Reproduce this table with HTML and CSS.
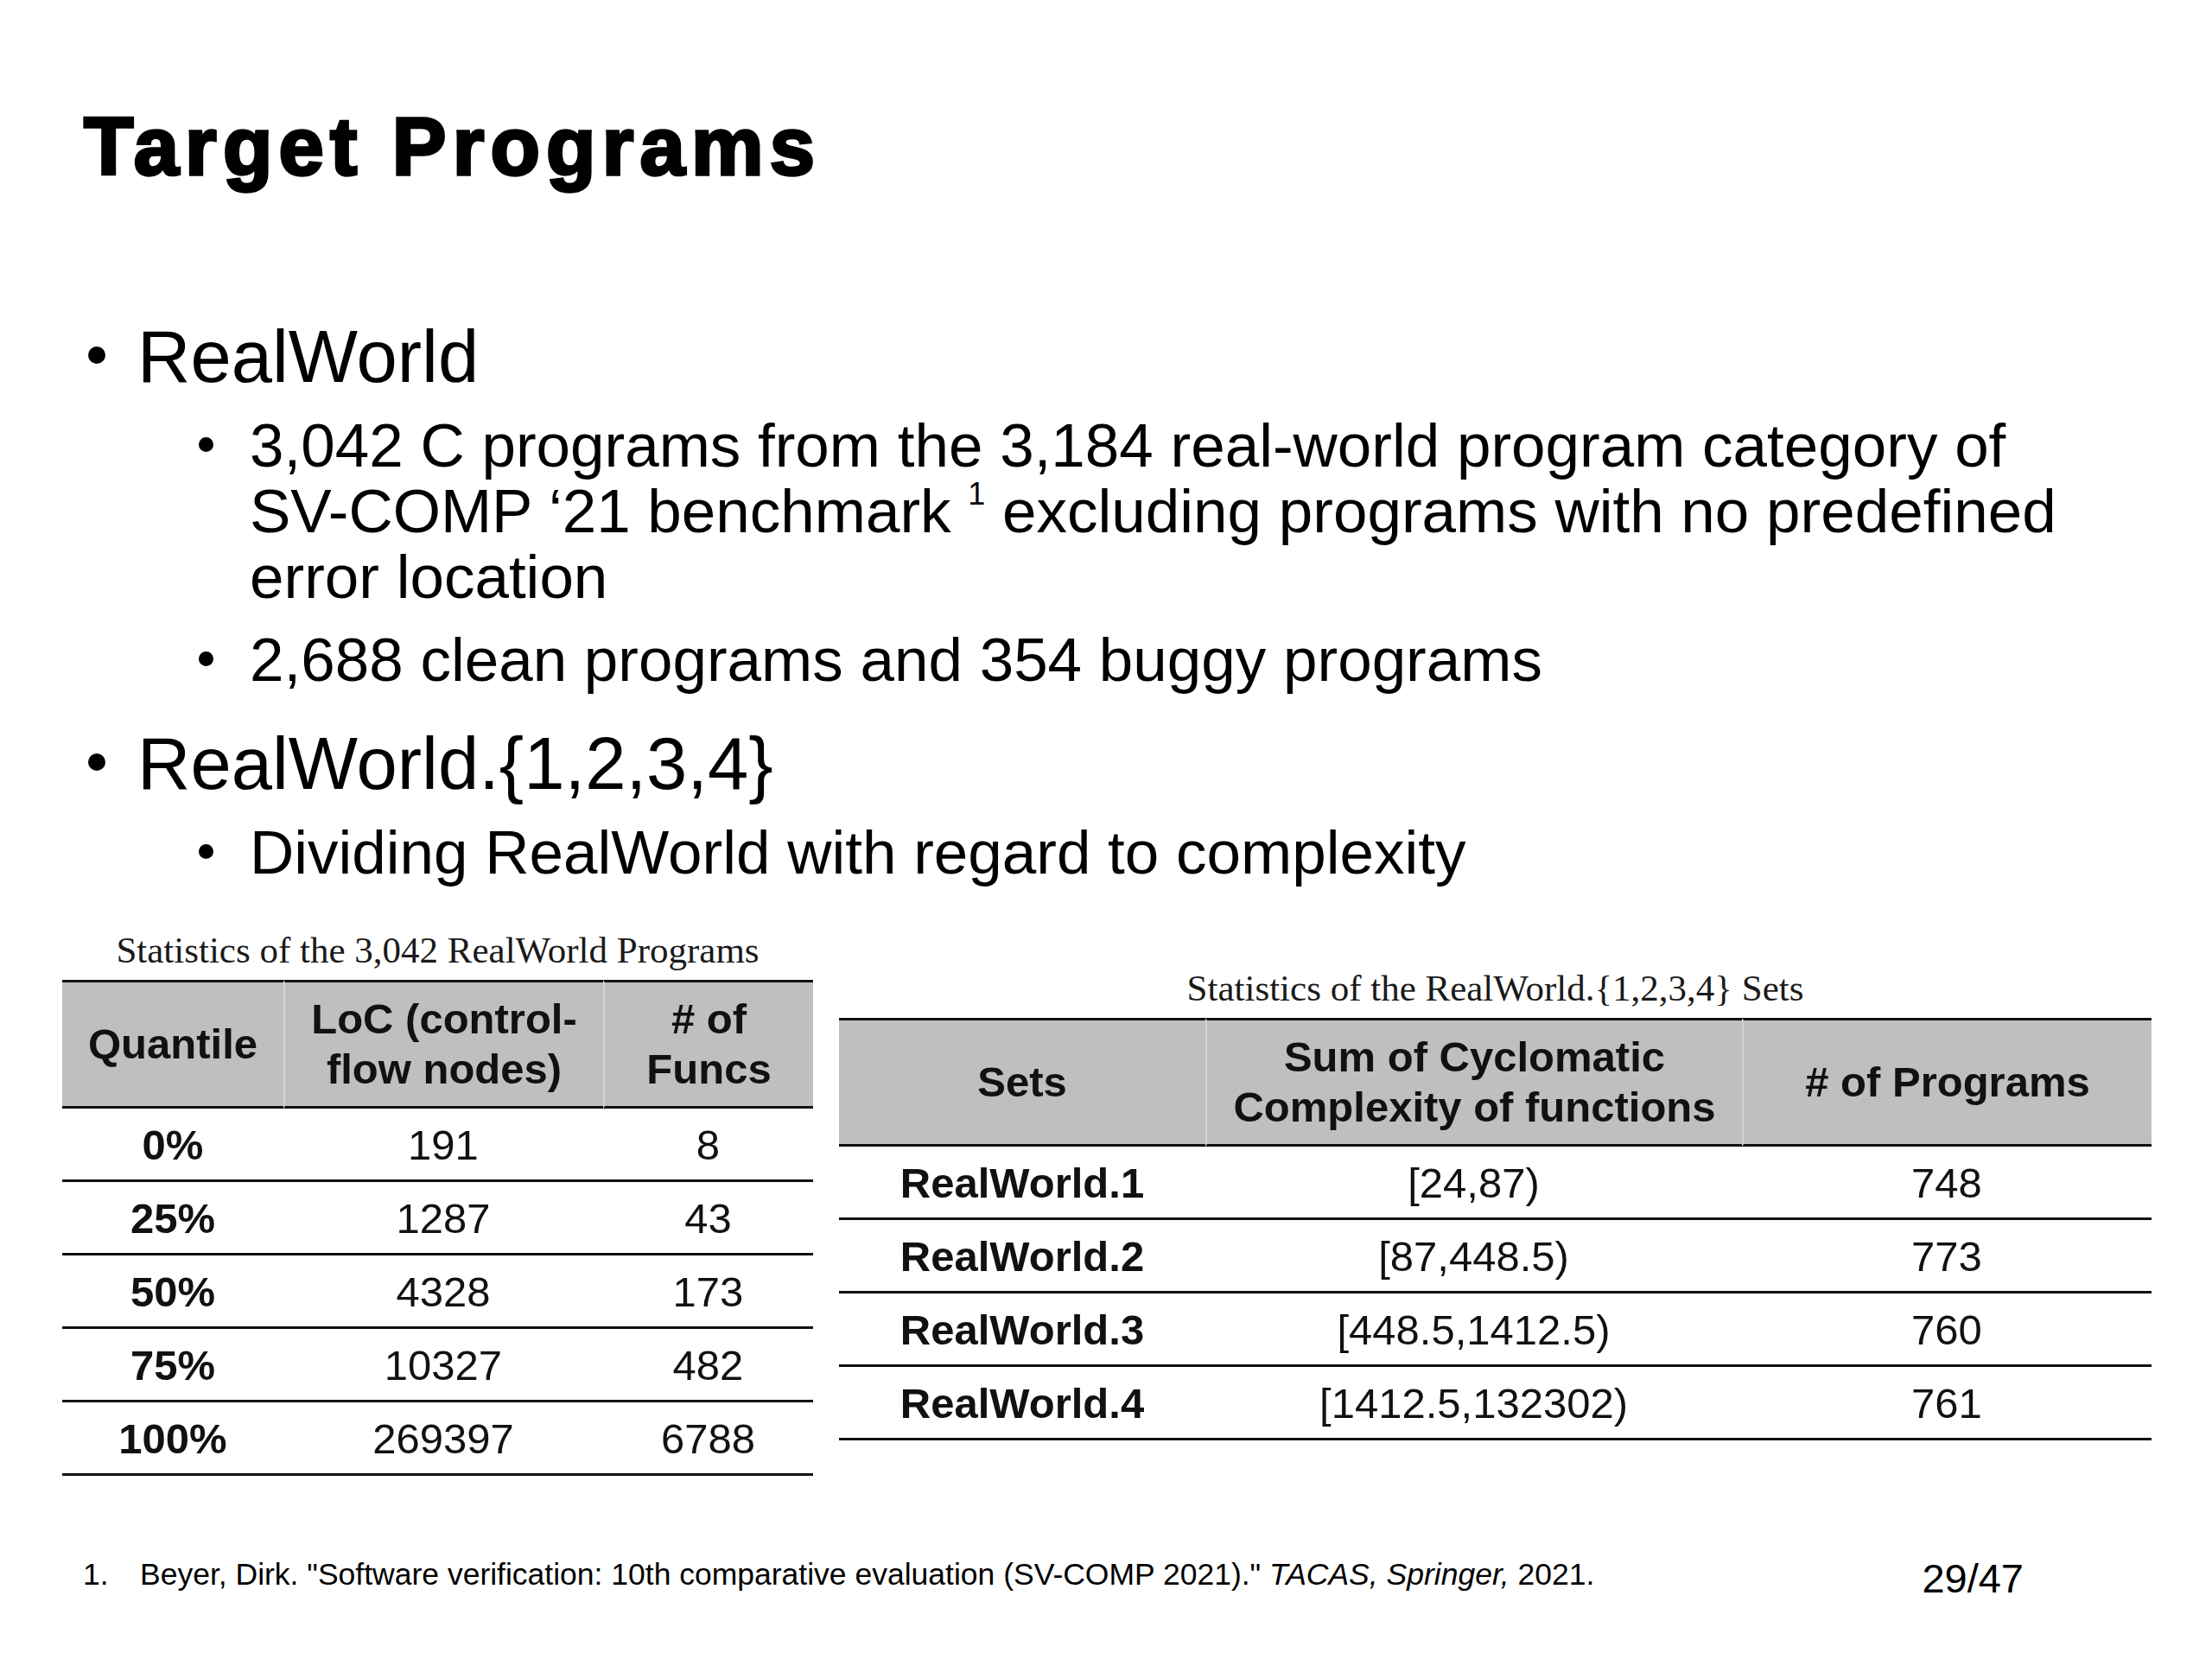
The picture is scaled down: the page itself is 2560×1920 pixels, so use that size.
FILE: index.html
```html
<!DOCTYPE html>
<html lang="en">
<head>
<meta charset="utf-8">
<title>Target Programs</title>
<link rel="stylesheet" href="styles.css">
</head>
<body>
<div class="slide">
  <h1 class="title">Target Programs</h1>

  <ul class="bullets">
    <li class="item">
      <div class="row main"><span class="mark"><i class="dot"></i></span><span class="text">RealWorld</span></div>
      <ul class="sub">
        <li class="row subitem"><span class="mark"><i class="dot"></i></span><span class="text">3,042 C programs from the 3,184 real-world program category of <span class="nowrap">SV-COMP</span> ‘21 benchmark <sup class="ref">1</sup> excluding programs with no predefined error location</span></li>
        <li class="row subitem"><span class="mark"><i class="dot"></i></span><span class="text">2,688 clean programs and 354 buggy programs</span></li>
      </ul>
    </li>
    <li class="item">
      <div class="row main"><span class="mark"><i class="dot"></i></span><span class="text">RealWorld.{1,2,3,4}</span></div>
      <ul class="sub">
        <li class="row subitem"><span class="mark"><i class="dot"></i></span><span class="text">Dividing RealWorld with regard to complexity</span></li>
      </ul>
    </li>
  </ul>

  <div class="tables">
    <table class="stats stats-quantile">
      <caption>Statistics of the 3,042 RealWorld Programs</caption>
      <colgroup><col class="c-q"><col class="c-loc"><col class="c-fn"></colgroup>
      <thead>
        <tr><th>Quantile</th><th>LoC (control-<br>flow nodes)</th><th># of<br>Funcs</th></tr>
      </thead>
      <tbody>
        <tr><td class="key">0%</td><td>191</td><td>8</td></tr>
        <tr><td class="key">25%</td><td>1287</td><td>43</td></tr>
        <tr><td class="key">50%</td><td>4328</td><td>173</td></tr>
        <tr><td class="key">75%</td><td>10327</td><td>482</td></tr>
        <tr><td class="key">100%</td><td>269397</td><td>6788</td></tr>
      </tbody>
    </table>

    <table class="stats stats-sets">
      <caption>Statistics of the RealWorld.{1,2,3,4} Sets</caption>
      <colgroup><col class="c-set"><col class="c-sum"><col class="c-prog"></colgroup>
      <thead>
        <tr><th>Sets</th><th>Sum of Cyclomatic<br>Complexity of functions</th><th># of Programs</th></tr>
      </thead>
      <tbody>
        <tr><td class="key">RealWorld.1</td><td>[24,87)</td><td>748</td></tr>
        <tr><td class="key">RealWorld.2</td><td>[87,448.5)</td><td>773</td></tr>
        <tr><td class="key">RealWorld.3</td><td>[448.5,1412.5)</td><td>760</td></tr>
        <tr><td class="key">RealWorld.4</td><td>[1412.5,132302)</td><td>761</td></tr>
      </tbody>
    </table>
  </div>

  <footer class="foot">
    <span class="fn-num">1.</span>
    <span class="fn-text">Beyer, Dirk. "Software verification: 10th comparative evaluation (SV-COMP 2021)." <i>TACAS, Springer,</i> 2021.</span>
    <span class="page">29/47</span>
  </footer>
</div>
</body>
</html>
```

FILE: styles.css
```css
html, body {
  margin: 0;
  padding: 0;
  background: #ffffff;
}

.slide {
  width: 2560px;
  height: 1920px;
  overflow: hidden;
  font-family: "Liberation Sans", Arial, sans-serif;
  color: #000;
}

.title {
  margin: 0;
  padding: 115px 0 0 97px;
  font-size: 94px;
  line-height: 110px;
  font-weight: 700;
  letter-spacing: 7.2px;
  -webkit-text-stroke: 3.4px #000;
}

.bullets {
  list-style: none;
  margin: 138px 0 0 102px;
  padding: 0;
}

.item + .item {
  margin-top: 32px;
}

.row {
  display: flex;
}

.mark {
  flex: none;
}

.dot {
  display: inline-block;
  border-radius: 50%;
  background: #000;
  vertical-align: baseline;
}

.main {
  font-size: 85px;
  line-height: 100px;
}

.main .mark {
  width: 57px;
}

.main .dot {
  width: 20px;
  height: 20px;
  margin-bottom: 21px;
}

.sub {
  list-style: none;
  margin: 15px 0 0 128px;
  padding: 0;
}

.subitem {
  font-size: 71px;
  line-height: 76px;
}

.subitem + .subitem {
  margin-top: 20px;
}

.subitem .mark {
  width: 59px;
}

.subitem .dot {
  width: 17px;
  height: 17px;
  margin-bottom: 17px;
}

.subitem .text {
  width: 2180px;
}

.nowrap {
  white-space: nowrap;
}

.ref {
  font-size: 36px;
  line-height: 0;
  vertical-align: 32px;
}

/* tables */
.tables {
  display: flex;
  align-items: flex-start;
  gap: 30px;
  margin: 50px 0 0 72px;
}

.stats {
  border-collapse: separate;
  border-spacing: 0;
  table-layout: fixed;
  font-size: 49px;
  color: #111;
}

.stats caption {
  font-family: "Liberation Serif", "Times New Roman", serif;
  font-size: 43px;
  line-height: 50px;
  padding-bottom: 9px;
  color: #1a1a1a;
  white-space: nowrap;
}

.stats th {
  background: #bfbfbf;
  border-top: 3px solid #111;
  border-bottom: 3px solid #111;
  padding: 13px 0 14px;
  line-height: 58px;
  font-weight: 700;
  text-align: center;
  vertical-align: middle;
}

.stats th + th {
  border-left: 2px solid #d4d4d4;
}

.stats td {
  padding: 2px 0 0;
  line-height: 80px;
  border-bottom: 3px solid #111;
  text-align: center;
  white-space: nowrap;
}

.stats td.key {
  font-weight: 700;
}

.stats-quantile {
  width: 869px;
}

.c-q { width: 256px; }
.c-loc { width: 370px; }
.c-fn { width: 243px; }

.stats-sets {
  width: 1519px;
  margin-top: 44px;
}

.c-set { width: 424px; }
.c-sum { width: 621px; }
.c-prog { width: 474px; }

/* footer */
.foot {
  display: flex;
  align-items: flex-start;
  margin-top: 94px;
  padding: 0 218px 0 96px;
}

.fn-num {
  width: 66px;
  flex: none;
  font-size: 35.5px;
  line-height: 40px;
}

.fn-text {
  font-size: 35.5px;
  line-height: 40px;
}

.page {
  margin-left: auto;
  font-size: 47px;
  line-height: 50px;
}
```
